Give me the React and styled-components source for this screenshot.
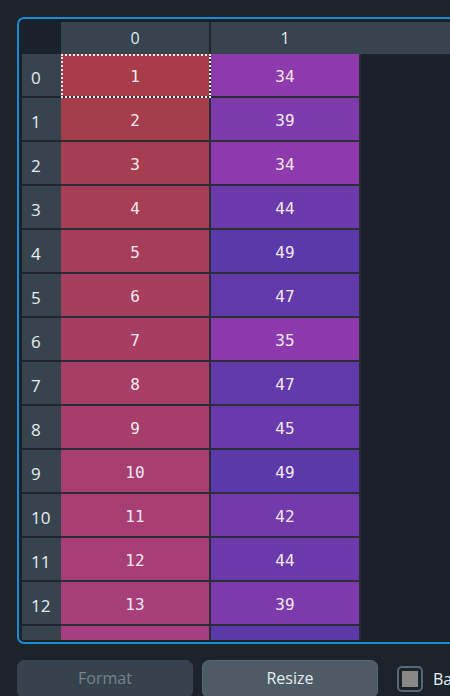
import React from 'react'
import styled, { createGlobalStyle } from 'styled-components'

const GlobalStyle = createGlobalStyle`
  html, body {
    margin: 0;
    padding: 0;
    background: #1b232b;
    overflow: hidden;
  }
  body {
    font-family: "Open Sans", "Noto Sans", sans-serif;
  }
`

const Page = styled.div`
  width: 450px;
  height: 696px;
  overflow: hidden;
  padding: 17px 0 0 17px;
  box-sizing: border-box;
`

const Panel = styled.div`
  width: 460px;
  height: 627px;
  box-sizing: border-box;
  border: 2px solid #1d8bd0;
  border-right: none;
  border-radius: 7px 0 0 7px;
  background: #19212a;
  padding: 3px 0 2px 3px;
`

const Scroller = styled.div`
  height: 100%;
  overflow: hidden;
`

const HeaderRow = styled.div`
  display: flex;
  height: 32px;
  background: #37444e;
`

const Corner = styled.div`
  width: 39px;
  flex: none;
  background: #19212a;
`

const ColHead = styled.div`
  width: 148px;
  flex: none;
  color: #e3e8ec;
  font-size: 16px;
  display: flex;
  align-items: center;
  justify-content: center;
  border-right: 2px solid ${p => (p.$last ? 'transparent' : '#1f262e')};
`

const Row = styled.div`
  display: flex;
  height: 44px;
`

const RowHead = styled.div`
  width: 39px;
  flex: none;
  box-sizing: border-box;
  background: #37444e;
  border-bottom: 2px solid #1f262e;
  color: #e8ecef;
  font-size: 17px;
  display: flex;
  align-items: center;
  padding: 4px 0 0 9px;
`

const Cell = styled.div`
  width: 150px;
  flex: none;
  box-sizing: border-box;
  border-bottom: 2px solid #2a2d35;
  border-right: 2px solid #2a2d35;
  color: #f3e8f2;
  font-family: "DejaVu Sans Mono", "Liberation Mono", monospace;
  font-size: 16px;
  display: flex;
  align-items: center;
  justify-content: center;
  padding-top: 2px;
  ${p => p.$focus && 'outline: 2px dotted #f4ecec; outline-offset: -2px;'}
`

const Buttons = styled.div`
  display: flex;
  align-items: center;
  gap: 9px;
  padding-top: 16px;
`

const Button = styled.button`
  width: 176px;
  height: 38px;
  flex: none;
  border-radius: 7px;
  border: 1px solid ${p => (p.disabled ? '#36434d' : '#5a6771')};
  background: ${p => (p.disabled ? '#36434d' : '#4d5b65')};
  color: ${p => (p.disabled ? '#77838b' : '#e9ecee')};
  font-family: "Open Sans", "Noto Sans", sans-serif;
  font-size: 16px;
  padding: 0 0 2px;
`

const CheckLabel = styled.label`
  display: flex;
  align-items: center;
  gap: 10px;
  margin-left: 10px;
  color: #eef1f3;
  font-size: 16px;
  white-space: nowrap;
`

const Box = styled.span`
  width: 26px;
  height: 26px;
  flex: none;
  box-sizing: border-box;
  border: 2px solid #5b6770;
  border-radius: 5px;
  padding: 3px;
  display: flex;
  &::after {
    content: '';
    flex: 1;
    background: #8a8886;
  }
`

const col0 = [1, 2, 3, 4, 5, 6, 7, 8, 9, 10, 11, 12, 13, 14]
const col1 = [34, 39, 34, 44, 49, 47, 35, 47, 45, 49, 42, 44, 39, 49]

const mix = (a, b, t) => Math.round(a + (b - a) * t)
const rgb = (a, b, t) => `rgb(${mix(a[0], b[0], t)}, ${mix(a[1], b[1], t)}, ${mix(a[2], b[2], t)})`

const redScale = v => rgb([166, 61, 72], [167, 63, 122], (v - 1) / 12)
const purpleScale = v => rgb([143, 58, 172], [90, 58, 170], (v - 34) / 15)

export default function App() {
  const last = col0.length - 1
  return (
    <Page>
      <GlobalStyle />
      <Panel>
        <Scroller>
          <HeaderRow>
            <Corner />
            <ColHead>0</ColHead>
            <ColHead $last>1</ColHead>
          </HeaderRow>
          {col0.map((v, i) => (
            <Row key={i}>
              <RowHead>{i < last ? i : ''}</RowHead>
              <Cell $focus={i === 0} style={{ background: redScale(v) }}>
                {i < last ? v : ''}
              </Cell>
              <Cell style={{ background: purpleScale(col1[i]) }}>
                {i < last ? col1[i] : ''}
              </Cell>
            </Row>
          ))}
        </Scroller>
      </Panel>
      <Buttons>
        <Button disabled>Format</Button>
        <Button>Resize</Button>
        <CheckLabel>
          <Box />
          Background
        </CheckLabel>
      </Buttons>
    </Page>
  )
}
